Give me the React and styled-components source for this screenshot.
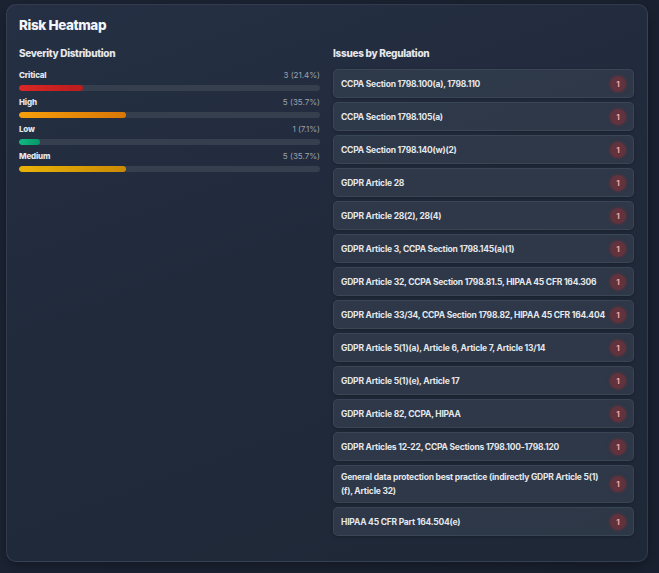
import React from "react";
import styled, { createGlobalStyle } from "styled-components";

const Global = createGlobalStyle`
  html, body { margin: 0; padding: 0; background: #1a2231; }
  body { font-family: Inter, "Noto Sans", sans-serif; -webkit-font-smoothing: antialiased; }
  * { box-sizing: border-box; }
`;

const Page = styled.div`
  padding: 4px 11px 11px 6px;
  min-height: 573px;
  background: linear-gradient(90deg, #1c2434 0%, #1a2231 100%);
`;

const Panel = styled.section`
  border: 1px solid rgba(148, 163, 184, 0.16);
  border-radius: 10px;
  background: linear-gradient(160deg, #253044 0%, #212a3b 45%, #1f2837 100%);
  box-shadow: 0 4px 14px rgba(0, 0, 0, 0.35);
  padding: 10px 13px 24px 12px;
  height: 558px;
`;

const Title = styled.h2`
  margin: 0;
  font-size: 13.5px;
  line-height: 20px;
  font-weight: 800;
  color: #f1f5f9;
  letter-spacing: -0.03em;
`;

const Columns = styled.div`
  display: grid;
  grid-template-columns: 1fr 1fr;
  column-gap: 13px;
  margin-top: 11px;
  align-items: start;
`;

const Column = styled.div`
  display: flex;
  flex-direction: column;
`;

const Heading = styled.h3`
  margin: 0 0 8px;
  font-size: 10px;
  line-height: 15px;
  font-weight: 800;
  color: #e5e7eb;
  letter-spacing: -0.03em;
`;

const SevRow = styled.div`
  display: flex;
  flex-direction: column;
  gap: 4px;
  margin-bottom: 5px;
`;

const SevHead = styled.div`
  display: flex;
  justify-content: space-between;
  align-items: center;
  height: 12px;
`;

const SevLabel = styled.span`
  font-size: 8px;
  font-weight: 800;
  color: #e5e7eb;
  letter-spacing: -0.02em;
`;

const SevValue = styled.span`
  font-size: 8px;
  color: #9ca3af;
`;

const Track = styled.div`
  height: 6px;
  border-radius: 3px;
  background: #363f4e;
  overflow: hidden;
`;

const Fill = styled.div`
  height: 100%;
  border-radius: 3px;
  background: ${(p) => p.$bg};
`;

const List = styled.div`
  display: flex;
  flex-direction: column;
  gap: 4px;
`;

const Item = styled.div`
  display: flex;
  align-items: center;
  justify-content: space-between;
  gap: 3px;
  min-height: 29px;
  padding: 4px 7px;
  border: 1px solid rgba(148, 163, 184, 0.12);
  border-radius: 5px;
  background: rgba(51, 61, 78, 0.75);
  box-shadow: 0 1px 3px rgba(0, 0, 0, 0.25);
`;

const ItemText = styled.span`
  font-size: 8.5px;
  line-height: 14px;
  font-weight: 700;
  color: #e5e7eb;
  letter-spacing: -0.025em;
`;

const Badge = styled.span`
  flex: none;
  width: 16px;
  height: 16px;
  border-radius: 50%;
  display: flex;
  align-items: center;
  justify-content: center;
  background: rgba(220, 38, 38, 0.3);
  box-shadow: 0 0 4px rgba(220, 38, 38, 0.25);
  color: #fca5a5;
  font-size: 8px;
  font-weight: 700;
`;

const severity = [
  { label: "Critical", count: 3, pct: 21.4, bg: "linear-gradient(90deg, #dc2626, #b91c1c)" },
  { label: "High", count: 5, pct: 35.7, bg: "linear-gradient(90deg, #f59e0b, #d97706)" },
  { label: "Low", count: 1, pct: 7.1, bg: "linear-gradient(90deg, #10b981, #059669)" },
  { label: "Medium", count: 5, pct: 35.7, bg: "linear-gradient(90deg, #eab308, #ca8a04)" },
];

const regulations = [
  "CCPA Section 1798.100(a), 1798.110",
  "CCPA Section 1798.105(a)",
  "CCPA Section 1798.140(w)(2)",
  "GDPR Article 28",
  "GDPR Article 28(2), 28(4)",
  "GDPR Article 3, CCPA Section 1798.145(a)(1)",
  "GDPR Article 32, CCPA Section 1798.81.5, HIPAA 45 CFR 164.306",
  "GDPR Article 33/34, CCPA Section 1798.82, HIPAA 45 CFR 164.404",
  "GDPR Article 5(1)(a), Article 6, Article 7, Article 13/14",
  "GDPR Article 5(1)(e), Article 17",
  "GDPR Article 82, CCPA, HIPAA",
  "GDPR Articles 12-22, CCPA Sections 1798.100-1798.120",
  "General data protection best practice (indirectly GDPR Article 5(1)(f), Article 32)",
  "HIPAA 45 CFR Part 164.504(e)",
];

export default function App() {
  return (
    <Page>
      <Global />
      <Panel>
        <Title>Risk Heatmap</Title>
        <Columns>
          <Column>
            <Heading>Severity Distribution</Heading>
            {severity.map((s) => (
              <SevRow key={s.label}>
                <SevHead>
                  <SevLabel>{s.label}</SevLabel>
                  <SevValue>
                    {s.count} ({s.pct}%)
                  </SevValue>
                </SevHead>
                <Track>
                  <Fill $bg={s.bg} style={{ width: `${s.pct}%` }} />
                </Track>
              </SevRow>
            ))}
          </Column>
          <Column>
            <Heading>Issues by Regulation</Heading>
            <List>
              {regulations.map((r) => (
                <Item key={r}>
                  <ItemText>{r}</ItemText>
                  <Badge>1</Badge>
                </Item>
              ))}
            </List>
          </Column>
        </Columns>
      </Panel>
    </Page>
  );
}
